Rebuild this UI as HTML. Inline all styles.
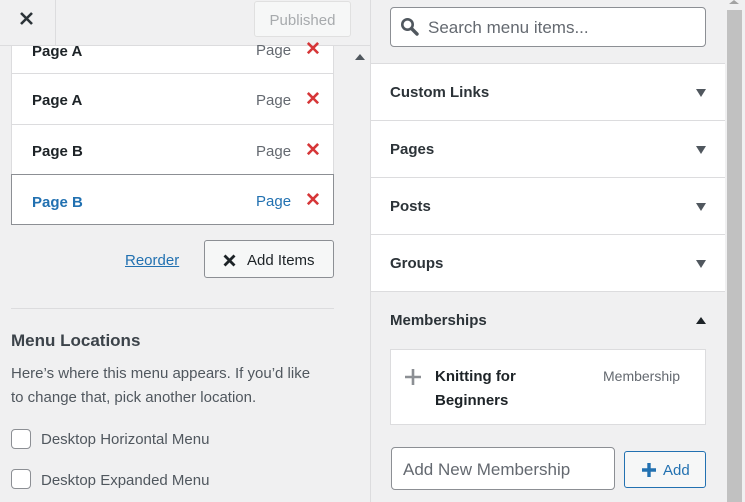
<!DOCTYPE html>
<html><head><meta charset="utf-8"><style>
*{box-sizing:border-box;margin:0;padding:0}
body{width:745px;height:502px;overflow:hidden;background:#f0f0f1;font-family:"Liberation Sans",sans-serif;color:#1d2327;position:relative}
.a{position:absolute}
.row{position:absolute;left:11px;width:323px;background:#fff;border:1px solid #dcdcde;font-size:15px}
.row .t{position:absolute;left:20px;font-weight:bold}
.row .p{position:absolute;left:244px;color:#646970}
.row .x{position:absolute;left:293px;color:#d63638;font-size:19px;font-weight:bold}
.sec{position:absolute;left:371px;width:354px;background:#fff;border-bottom:1px solid #dcdcde;height:57px;font-size:15px;font-weight:bold;color:#2c3338}
.sec span{position:absolute;left:19px;top:20px}
.sec i{position:absolute;left:325px;top:25px;width:0;height:0;border-left:5px solid transparent;border-right:5px solid transparent;border-top:8px solid #50575e}
</style></head><body>
<div class="a" style="left:0;top:0;width:371px;height:46px;border-bottom:1px solid #dcdcde;background:#f0f0f1"></div>
<div class="a" style="left:55px;top:0;width:1px;height:46px;background:#dcdcde"></div>
<svg class="a" style="left:19px;top:11px" width="15" height="15" viewBox="0 0 15 15"><path d="M2 2L13 13M13 2L2 13" stroke="#2c3338" stroke-width="2.6"/></svg>
<div class="a" style="left:254px;top:1px;width:97px;height:36px;border:1px solid #e0e0e0;border-radius:3px;background:#f6f7f7;color:#a7aaad;font-size:15px;text-align:center;line-height:38px">Published</div>
<div class="row" style="top:46px;height:28px;border-top:none"><span class="t" style="top:-3px">Page A</span><span class="p" style="top:-4px">Page</span><span class="x" style="top:-8px">✕</span></div>
<div class="row" style="top:73px;height:52px"><span class="t" style="top:18px">Page A</span><span class="p" style="top:18px">Page</span><span class="x" style="top:14px">✕</span></div>
<div class="row" style="top:124px;height:51px"><span class="t" style="top:18px">Page B</span><span class="p" style="top:18px">Page</span><span class="x" style="top:14px">✕</span></div>
<div class="row" style="top:174px;height:51px;border-color:#8c8f94"><span class="t" style="top:19px;color:#2271b1">Page B</span><span class="p" style="top:18px;color:#2271b1">Page</span><span class="x" style="top:14px">✕</span></div>
<div class="a" style="left:355px;top:54px;width:0;height:0;border-left:5px solid transparent;border-right:5px solid transparent;border-bottom:6px solid #50575e"></div>
<div class="a" style="left:125px;top:252px;font-size:15px;color:#2271b1;text-decoration:underline">Reorder</div>
<div class="a" style="left:204px;top:240px;width:130px;height:38px;border:1px solid #8c8f94;border-radius:3px;background:#f6f7f7;font-size:15px;color:#1d2327"><svg class="a" style="left:18px;top:13px" width="13" height="13" viewBox="0 0 13 13"><path d="M1.5 1.5L11.5 11.5M11.5 1.5L1.5 11.5" stroke="#1d2327" stroke-width="2.8"/></svg><span class="a" style="left:42px;top:11px">Add Items</span></div>
<div class="a" style="left:11px;top:308px;width:323px;height:1px;background:#dcdcde"></div>
<div class="a" style="left:11px;top:331px;font-size:17px;font-weight:bold;color:#3c434a">Menu Locations</div>
<div class="a" style="left:11px;top:362px;width:312px;font-size:15px;line-height:24px;color:#50575e">Here’s where this menu appears. If you’d like to change that, pick another location.</div>
<div class="a" style="left:11px;top:429px;width:20px;height:20px;border:1px solid #8c8f94;border-radius:4px;background:#fff"></div>
<div class="a" style="left:41px;top:431px;font-size:15px;color:#50575e">Desktop Horizontal Menu</div>
<div class="a" style="left:11px;top:469px;width:20px;height:20px;border:1px solid #8c8f94;border-radius:4px;background:#fff"></div>
<div class="a" style="left:41px;top:472px;font-size:15px;color:#50575e">Desktop Expanded Menu</div>
<div class="a" style="left:370px;top:0;width:1px;height:502px;background:#dcdcde"></div>
<div class="a" style="left:371px;top:0;width:354px;height:64px;background:#f0f0f1;border-bottom:1px solid #dcdcde"></div>
<div class="a" style="left:390px;top:7px;width:316px;height:40px;border:1px solid #8c8f94;border-radius:4px;background:#fff"></div>
<svg class="a" style="left:400px;top:17px" width="19" height="19" viewBox="0 0 19 19"><circle cx="7.5" cy="7.5" r="5.2" fill="none" stroke="#50575e" stroke-width="2.6"/><path d="M11.5 11.5L17 17" stroke="#50575e" stroke-width="3.4" stroke-linecap="round"/></svg>
<div class="a" style="left:428px;top:18px;font-size:17px;color:#646970">Search menu items...</div>
<div class="sec" style="top:64px"><span>Custom Links</span><i></i></div>
<div class="sec" style="top:121px"><span>Pages</span><i></i></div>
<div class="sec" style="top:178px"><span>Posts</span><i></i></div>
<div class="sec" style="top:235px"><span>Groups</span><i></i></div>
<div class="sec" style="top:292px;background:#f0f0f1;height:210px;border-bottom:none"><span>Memberships</span><i style="border-top:none;border-bottom:7px solid #1d2327;top:25px"></i></div>
<div class="a" style="left:390px;top:349px;width:316px;height:76px;background:#fff;border:1px solid #dcdcde"></div>
<svg class="a" style="left:404px;top:368px" width="18" height="18" viewBox="0 0 18 18"><path d="M9 1V17M1 9H17" stroke="#8c8f94" stroke-width="2.6"/></svg>
<div class="a" style="left:435px;top:365px;font-size:15px;font-weight:bold;line-height:24px;color:#1d2327">Knitting for<br>Beginners</div>
<div class="a" style="left:603px;top:368px;font-size:14px;color:#646970">Membership</div>
<div class="a" style="left:391px;top:447px;width:224px;height:43px;border:1px solid #8c8f94;border-radius:4px;background:#fff;font-size:17px;color:#646970;padding:12px 0 0 11px">Add New Membership</div>
<div class="a" style="left:624px;top:451px;width:82px;height:37px;border:1px solid #2271b1;border-radius:3px;background:#f6f7f7;color:#2271b1;font-size:15px"><svg class="a" style="left:16px;top:10px" width="16" height="16" viewBox="0 0 16 16"><path d="M8 1V15M1 8H15" stroke="#2271b1" stroke-width="3.4"/></svg><span class="a" style="left:38px;top:10px">Add</span></div>
<div class="a" style="left:725px;top:0;width:20px;height:502px;background:#f0f0f1"></div>
<div class="a" style="left:727px;top:10px;width:15px;height:492px;background:#c1c1c1"></div>
<div class="a" style="left:729px;top:0;width:0;height:0;border-left:5px solid transparent;border-right:5px solid transparent;border-bottom:4px solid #a3a3a3"></div>
</body></html>
